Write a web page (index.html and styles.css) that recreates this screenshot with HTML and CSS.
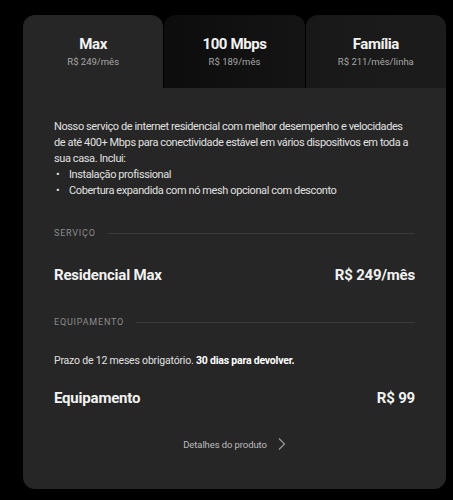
FILE: index.html
```html
<!DOCTYPE html>
<html lang="pt-BR">
<head>
    <meta charset="UTF-8">
    <meta name="viewport" content="width=device-width, initial-scale=1.0">
    <title>Planos de Internet</title>
    <link rel="stylesheet" href="styles.css">
</head>
<body>

    <div class="plan-box">
        <!-- Plan tabs -->
        <div class="tabs">
            <div class="tab active">
                <h3>Max</h3>
                <p>R$ 249/mês</p>
            </div>
            <div class="tab">
                <h3>100 Mbps</h3>
                <p>R$ 189/mês</p>
            </div>
            <div class="tab tab-last">
                <h3>Família</h3>
                <p>R$ 211/mês/linha</p>
            </div>
        </div>

        <!-- Plan details -->
        <div class="panel">
            <p class="desc">Nosso serviço de internet residencial com melhor desempenho e velocidades de até 400+ Mbps para conectividade estável em vários dispositivos em toda a sua casa. Inclui:</p>
            <ul class="features">
                <li>Instalação profissional</li>
                <li>Cobertura expandida com nó mesh opcional com desconto</li>
            </ul>

            <div class="section-label"><span>Serviço</span></div>
            <div class="price-row">
                <span>Residencial Max</span>
                <span>R$ 249/mês</span>
            </div>

            <div class="section-label"><span>Equipamento</span></div>
            <p class="note">Prazo de 12 meses obrigatório. <strong>30 dias para devolver.</strong></p>
            <div class="price-row">
                <span>Equipamento</span>
                <span>R$ 99</span>
            </div>

            <a class="details-link" href="#">Detalhes do produto
                <svg width="8" height="14" viewBox="0 0 8 14"><path d="M1 1.5l5.5 5.5L1 12.5" fill="none" stroke="#9a9a9a" stroke-width="1.2"/></svg>
            </a>
        </div>
    </div>

</body>
</html>
```

FILE: styles.css
```css
* {
    margin: 0;
    padding: 0;
    box-sizing: border-box;
}

body {
    background-color: #000;
    color: #e6e6e6;
    font-family: 'Roboto', 'Liberation Sans', sans-serif;
    padding: 15px 7px 0 23px;
}

.plan-box {
    width: 423px;
}

.tabs {
    display: flex;
    gap: 1px;
}

.tab {
    flex: 1;
    height: 73px;
    padding-top: 20px;
    text-align: center;
    border-radius: 12px 12px 0 0;
    background: linear-gradient(90deg, #0d0d0d, #141414);
}

.tab.active {
    background: #262626;
}

.tab-last {
    background: linear-gradient(90deg, #181818, #1c1c1c);
}

.tab h3 {
    font-size: 15px;
    font-weight: 700;
    letter-spacing: -0.4px;
    color: #f2f2f2;
    line-height: 18px;
}

.tab p {
    font-size: 9.5px;
    color: #a6a6a6;
    margin-top: 3px;
}

.panel {
    background-color: #262626;
    border-radius: 0 0 12px 12px;
    padding: 31px 31px 38px;
}

.desc, .features {
    font-size: 11px;
    line-height: 16px;
    letter-spacing: -0.4px;
    color: #e0e0e0;
}

.features {
    list-style: none;
}

.features li::before {
    content: "•";
    display: inline-block;
    width: 13px;
    padding-left: 2px;
}

.section-label {
    display: flex;
    align-items: center;
    gap: 12px;
    margin-top: 29px;
    font-size: 9px;
    letter-spacing: 0.8px;
    text-transform: uppercase;
    color: #8c8c8c;
}

.section-label::after {
    content: "";
    flex: 1;
    height: 1px;
    background-color: #3a3a3a;
}

.price-row {
    display: flex;
    justify-content: space-between;
    margin-top: 22px;
    font-size: 15px;
    font-weight: 700;
    letter-spacing: -0.2px;
    color: #f2f2f2;
}

.section-label + .price-row {
    margin-top: 28px;
}

.price-row + .section-label {
    margin-top: 33px;
}

.note {
    margin-top: 27px;
    font-size: 10.5px;
    letter-spacing: -0.2px;
    color: #e0e0e0;
}

.note strong {
    color: #fff;
}

.details-link {
    display: flex;
    justify-content: center;
    align-items: center;
    gap: 11px;
    margin-top: 30px;
    font-size: 9.5px;
    letter-spacing: -0.1px;
    color: #bdbdbd;
    text-decoration: none;
}
```
